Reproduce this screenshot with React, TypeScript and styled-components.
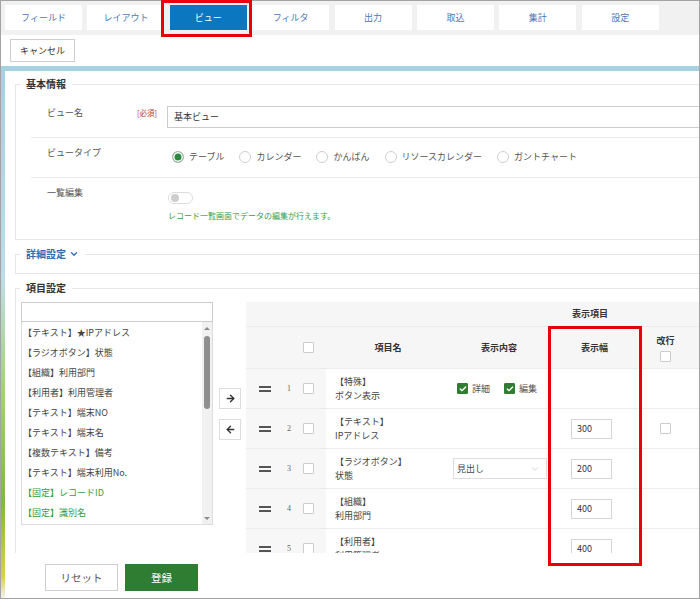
import React from "react";
import styled, { createGlobalStyle } from "styled-components";
import { ArrowRight, ArrowLeft, ChevronDown, Check } from "lucide-react";

const GlobalStyle = createGlobalStyle`
  html, body { margin: 0; padding: 0; background: #fff; }
  body {
    font-family: "Noto Sans CJK JP", "Noto Sans", sans-serif;
    color: #444;
  }
  * { box-sizing: border-box; }
`;

const Frame = styled.div`
  position: relative;
  width: 700px;
  height: 599px;
  border: 1px solid #a3a3a3;
  display: flex;
  flex-direction: column;
  font-size: 9px;
  line-height: 14px;
`;

/* 上部タブ */
const TabBar = styled.div`
  height: 34px;
  flex: none;
  background: #f1f1f1;
  display: flex;
  gap: 5.4px;
  padding: 4px 0 0 4px;
`;

const Tab = styled.div<{ $active?: boolean }>`
  width: 77px;
  height: 25px;
  display: flex;
  align-items: center;
  justify-content: center;
  background: ${(p) => (p.$active ? "#0b77c1" : "#fff")};
  color: ${(p) => (p.$active ? "#fff" : "#4b78b5")};
`;

const Mark = styled.div`
  position: absolute;
  border: 3px solid #e8000b;
  pointer-events: none;
`;

const Toolbar = styled.div`
  height: 31px;
  flex: none;
  background: #fff;
  padding: 4px 0 0 9px;
`;

const PlainButton = styled.button`
  height: 23px;
  padding: 0 9px;
  border: 1px solid #cfcfcf;
  background: #fff;
  color: #333;
  font: inherit;
  font-size: 9px;
`;

const Body = styled.div`
  flex: 1;
  display: flex;
  min-height: 0;
  padding: 5px 0 0 4px;
  background: linear-gradient(
    180deg,
    #a6d1e1 0%,
    #bcdde9 40%,
    #a3d26a 62%,
    #7fb93c 82%,
    #d9d24a 96%,
    #f3f3f3 100%
  );
`;

const Panel = styled.div`
  flex: 1;
  min-width: 0;
  background: #fff;
  display: flex;
  flex-direction: column;
`;

const Scroll = styled.div`
  flex: 1;
  overflow: hidden;
  padding: 13px 0 0 10px;
`;

/* セクション枠 */
const Section = styled.div<{ $gap?: number; $height?: number }>`
  margin-top: ${(p) => p.$gap ?? 0}px;
  border: 1px solid #e6e6e6;
  border-right: none;
  ${(p) => (p.$height ? `height: ${p.$height}px;` : "")}
`;

const Legend = styled.div<{ $link?: boolean }>`
  display: flex;
  width: fit-content;
  align-items: center;
  gap: 3px;
  margin: -8px 0 0 4px;
  padding: 0 6px;
  height: 14px;
  background: #fff;
  font-size: 10px;
  font-weight: bold;
  color: ${(p) => (p.$link ? "#2c6cb5" : "#333")};
`;

const Rows = styled.div`
  padding: 5px 0 16px 15px;
`;

const Row = styled.div<{ $pt: number; $pb: number; $last?: boolean }>`
  display: flex;
  align-items: flex-start;
  padding: ${(p) => p.$pt}px 0 ${(p) => p.$pb}px 16px;
  border-bottom: ${(p) => (p.$last ? "none" : "1px solid #e8e8e8")};
`;

const FieldLabel = styled.div`
  width: 90px;
  flex: none;
  color: #555;
`;

const Required = styled.div`
  width: 30px;
  flex: none;
  color: #c0392b;
  font-size: 7.5px;
`;

const Control = styled.div<{ $mt?: number }>`
  flex: 1;
  margin-top: ${(p) => p.$mt ?? 0}px;
`;

const TextInput = styled.div`
  height: 22px;
  border: 1px solid #cccccc;
  border-right: none;
  padding: 0 6px;
  display: flex;
  align-items: center;
  color: #333;
`;

const RadioGroup = styled.div`
  display: flex;
  align-items: center;
  padding-left: 5px;
`;

const RadioItem = styled.label`
  display: flex;
  align-items: center;
  gap: 5px;
  margin-right: 15px;
  color: #555;
`;

const RadioDot = styled.span<{ $on?: boolean }>`
  width: 12px;
  height: 12px;
  border-radius: 50%;
  border: 1px solid ${(p) => (p.$on ? "#b5b5b5" : "#d0d0d0")};
  background: ${(p) => (p.$on ? "#2b8a3e" : "#fff")};
  box-shadow: ${(p) => (p.$on ? "inset 0 0 0 1.5px #fff" : "none")};
`;

const Toggle = styled.div`
  width: 25px;
  height: 12px;
  border: 1px solid #dcdcdc;
  border-radius: 6px;
  background: #fff;
  padding: 1px 2px;
  margin-left: 1px;
  &::before {
    content: "";
    display: block;
    width: 8px;
    height: 8px;
    border-radius: 50%;
    background: #cdcdcd;
  }
`;

const Hint = styled.div`
  margin-top: 5px;
  margin-left: 1px;
  font-size: 8px;
  color: #35a047;
`;

/* 項目設定 */
const ItemLayout = styled.div`
  display: flex;
  align-items: flex-start;
  padding: 7px 0 0 5px;
`;

const Picker = styled.div`
  width: 192px;
  flex: none;
`;

const SearchBox = styled.div`
  height: 20px;
  border: 1px solid #cccccc;
`;

const ListBox = styled.div`
  height: 203px;
  border: 1px solid #dddddd;
  border-top: none;
  display: flex;
`;

const ListItems = styled.div`
  flex: 1;
  padding: 1px 0 0 1px;
`;

const ListItem = styled.div<{ $fixed?: boolean }>`
  line-height: 20px;
  height: 20px;
  color: ${(p) => (p.$fixed ? "#2fa03c" : "#444")};
  white-space: nowrap;
`;

const ScrollTrack = styled.div`
  width: 10px;
  flex: none;
  background: #f1f1f1;
  display: flex;
  flex-direction: column;
  align-items: center;
  padding: 5px 0 4px;
`;

const ScrollArrow = styled.span<{ $down?: boolean }>`
  width: 0;
  height: 0;
  border-left: 3px solid transparent;
  border-right: 3px solid transparent;
  ${(p) =>
    p.$down
      ? "border-top: 3px solid #8a8a8a; margin-top: auto;"
      : "border-bottom: 3px solid #8a8a8a;"}
`;

const ScrollThumb = styled.span`
  width: 6px;
  height: 73px;
  margin-top: 6px;
  border-radius: 3px;
  background: #8f8f8f;
`;

const MoveButtons = styled.div`
  display: flex;
  flex-direction: column;
  gap: 10px;
  padding-top: 86px;
  margin: 0 5px 0 6px;
`;

const MoveButton = styled.button`
  width: 22px;
  height: 21px;
  padding: 0;
  border: 1px solid #dddddd;
  background: #fff;
  color: #333;
  display: flex;
  align-items: center;
  justify-content: center;
`;

const Table = styled.div`
  width: 688px;
  flex: none;
`;

const GroupHead = styled.div`
  height: 25px;
  background: #f6f6f6;
  border-bottom: 1px solid #ececec;
  display: flex;
  align-items: center;
  justify-content: center;
  font-weight: bold;
  color: #333;
`;

const grid = "38px 10px 32px 124px 98px 93px 49px 1fr";

const HeadRow = styled.div`
  display: grid;
  grid-template-columns: ${grid};
  height: 42px;
  background: #f6f6f6;
  border-bottom: 1px solid #ececec;
  font-weight: bold;
  color: #333;
`;

const BodyRow = styled.div`
  display: grid;
  grid-template-columns: ${grid};
  height: 40px;
  border-bottom: 1px solid #ececec;
`;

const Cell = styled.div<{ $shade?: boolean; $center?: boolean; $pl?: number }>`
  display: flex;
  flex-direction: column;
  justify-content: center;
  align-items: ${(p) => (p.$center ? "center" : "flex-start")};
  padding-left: ${(p) => p.$pl ?? 0}px;
  background: ${(p) => (p.$shade ? "#f7f7f7" : "transparent")};
  min-width: 0;
`;

const InlineCell = styled(Cell)`
  flex-direction: row;
  justify-content: flex-start;
  align-items: center;
`;

const Grip = styled.span`
  width: 12px;
  height: 6px;
  border-top: 2px solid #555;
  border-bottom: 2px solid #555;
`;

const RowNo = styled.span`
  font-family: "Liberation Serif", serif;
  font-size: 8px;
  color: #666;
`;

const Box = styled.span<{ $on?: boolean }>`
  width: 11px;
  height: 11px;
  flex: none;
  border: 1px solid ${(p) => (p.$on ? "#2e7d32" : "#cccccc")};
  border-radius: 1px;
  background: ${(p) => (p.$on ? "#2e7d32" : "#fff")};
  display: inline-flex;
  align-items: center;
  justify-content: center;
  color: #fff;
`;

const CheckLabel = styled.span`
  margin: 0 14px 0 4px;
  white-space: nowrap;
  color: #555;
  &:last-child {
    margin-right: 0;
  }
`;

const Select = styled.div`
  width: 94px;
  height: 21px;
  margin-left: 3px;
  border: 1px solid #dddddd;
  display: flex;
  align-items: center;
  justify-content: space-between;
  padding: 0 6px 0 3px;
  color: #444;
`;

const WidthInput = styled.div`
  width: 41px;
  height: 20px;
  margin-left: 23px;
  border: 1px solid #d6d6d6;
  padding-left: 5px;
  display: flex;
  align-items: center;
  color: #333;
`;

const Footer = styled.div`
  height: 45px;
  flex: none;
  display: flex;
  gap: 7px;
  padding: 11px 0 0 40px;
`;

const FooterButton = styled.button<{ $primary?: boolean }>`
  width: 73px;
  height: 27px;
  font: inherit;
  font-size: 10.5px;
  border: 1px solid ${(p) => (p.$primary ? "#2e7d32" : "#cfcfcf")};
  background: ${(p) => (p.$primary ? "#2e7d32" : "#fff")};
  color: ${(p) => (p.$primary ? "#fff" : "#555")};
`;

const tabs = ["フィールド", "レイアウト", "ビュー", "フィルタ", "出力", "取込", "集計", "設定"];
const viewTypes = ["テーブル", "カレンダー", "かんばん", "リソースカレンダー", "ガントチャート"];
const fields = [
  { label: "【テキスト】★IPアドレス" },
  { label: "【ラジオボタン】状態" },
  { label: "【組織】利用部門" },
  { label: "【利用者】利用管理者" },
  { label: "【テキスト】端末NO" },
  { label: "【テキスト】端末名" },
  { label: "【複数テキスト】備考" },
  { label: "【テキスト】端末利用No." },
  { label: "【固定】レコードID", fixed: true },
  { label: "【固定】識別名", fixed: true },
];

type Item = {
  type: string;
  name: string;
  content?: "checks" | "select";
  width?: string;
  wrap?: boolean;
};

const items: Item[] = [
  { type: "【特殊】", name: "ボタン表示", content: "checks" },
  { type: "【テキスト】", name: "IPアドレス", width: "300", wrap: true },
  { type: "【ラジオボタン】", name: "状態", content: "select", width: "200" },
  { type: "【組織】", name: "利用部門", width: "400" },
  { type: "【利用者】", name: "利用管理者", width: "400" },
];

export default function App() {
  return (
    <>
      <GlobalStyle />
      <Frame>
        <TabBar>
          {tabs.map((t) => (
            <Tab key={t} $active={t === "ビュー"}>
              {t}
            </Tab>
          ))}
        </TabBar>
        <Toolbar>
          <PlainButton>キャンセル</PlainButton>
        </Toolbar>

        <Body>
          <Panel>
            <Scroll>
              <Section>
                <Legend>基本情報</Legend>
                <Rows>
                  <Row $pt={10} $pb={9}>
                    <FieldLabel>ビュー名</FieldLabel>
                    <Required>[必須]</Required>
                    <Control>
                      <TextInput>基本ビュー</TextInput>
                    </Control>
                  </Row>
                  <Row $pt={8} $pb={13}>
                    <FieldLabel>ビュータイプ</FieldLabel>
                    <Required />
                    <Control $mt={4}>
                      <RadioGroup>
                        {viewTypes.map((v, i) => (
                          <RadioItem key={v}>
                            <RadioDot $on={i === 0} />
                            {v}
                          </RadioItem>
                        ))}
                      </RadioGroup>
                    </Control>
                  </Row>
                  <Row $pt={8} $pb={0} $last>
                    <FieldLabel>一覧編集</FieldLabel>
                    <Required />
                    <Control $mt={6}>
                      <Toggle />
                      <Hint>レコード一覧画面でデータの編集が行えます。</Hint>
                    </Control>
                  </Row>
                </Rows>
              </Section>

              <Section $gap={14} $height={20}>
                <Legend $link>
                  詳細設定
                  <ChevronDown size={10} strokeWidth={3} />
                </Legend>
              </Section>

              <Section $gap={14}>
                <Legend>項目設定</Legend>
                <ItemLayout>
                  <Picker>
                    <SearchBox />
                    <ListBox>
                      <ListItems>
                        {fields.map((f) => (
                          <ListItem key={f.label} $fixed={f.fixed}>
                            {f.label}
                          </ListItem>
                        ))}
                      </ListItems>
                      <ScrollTrack>
                        <ScrollArrow />
                        <ScrollThumb />
                        <ScrollArrow $down />
                      </ScrollTrack>
                    </ListBox>
                  </Picker>

                  <MoveButtons>
                    <MoveButton>
                      <ArrowRight size={11} strokeWidth={3} />
                    </MoveButton>
                    <MoveButton>
                      <ArrowLeft size={11} strokeWidth={3} />
                    </MoveButton>
                  </MoveButtons>

                  <Table>
                    <GroupHead>表示項目</GroupHead>
                    <HeadRow>
                      <Cell />
                      <Cell />
                      <Cell $pl={9}>
                        <Box />
                      </Cell>
                      <Cell $center>項目名</Cell>
                      <Cell $center>表示内容</Cell>
                      <Cell $center>表示幅</Cell>
                      <Cell $center>
                        改行
                        <Box style={{ marginTop: 3 }} />
                      </Cell>
                      <Cell />
                    </HeadRow>
                    {items.map((it, i) => (
                      <BodyRow key={it.name}>
                        <Cell $shade $center>
                          <Grip />
                        </Cell>
                        <Cell $shade $center>
                          <RowNo>{i + 1}</RowNo>
                        </Cell>
                        <Cell $shade $pl={9}>
                          <Box />
                        </Cell>
                        <Cell $pl={9}>
                          <span>{it.type}</span>
                          <span>{it.name}</span>
                        </Cell>
                        <InlineCell $pl={it.content === "checks" ? 7 : 0}>
                          {it.content === "checks" && (
                            <>
                              <Box $on>
                                <Check size={8} strokeWidth={4} />
                              </Box>
                              <CheckLabel>詳細</CheckLabel>
                              <Box $on>
                                <Check size={8} strokeWidth={4} />
                              </Box>
                              <CheckLabel>編集</CheckLabel>
                            </>
                          )}
                          {it.content === "select" && (
                            <Select>
                              見出し
                              <ChevronDown size={10} strokeWidth={1.5} color="#bbb" />
                            </Select>
                          )}
                        </InlineCell>
                        <Cell>{it.width && <WidthInput>{it.width}</WidthInput>}</Cell>
                        <Cell $center>{it.wrap && <Box />}</Cell>
                        <Cell />
                      </BodyRow>
                    ))}
                  </Table>
                </ItemLayout>
              </Section>
            </Scroll>

            <Footer>
              <FooterButton>リセット</FooterButton>
              <FooterButton $primary>登録</FooterButton>
            </Footer>
          </Panel>
        </Body>

        <Mark style={{ left: 160, top: -1, width: 91, height: 37 }} />
        <Mark style={{ left: 547, top: 325, width: 94, height: 240 }} />
      </Frame>
    </>
  );
}
